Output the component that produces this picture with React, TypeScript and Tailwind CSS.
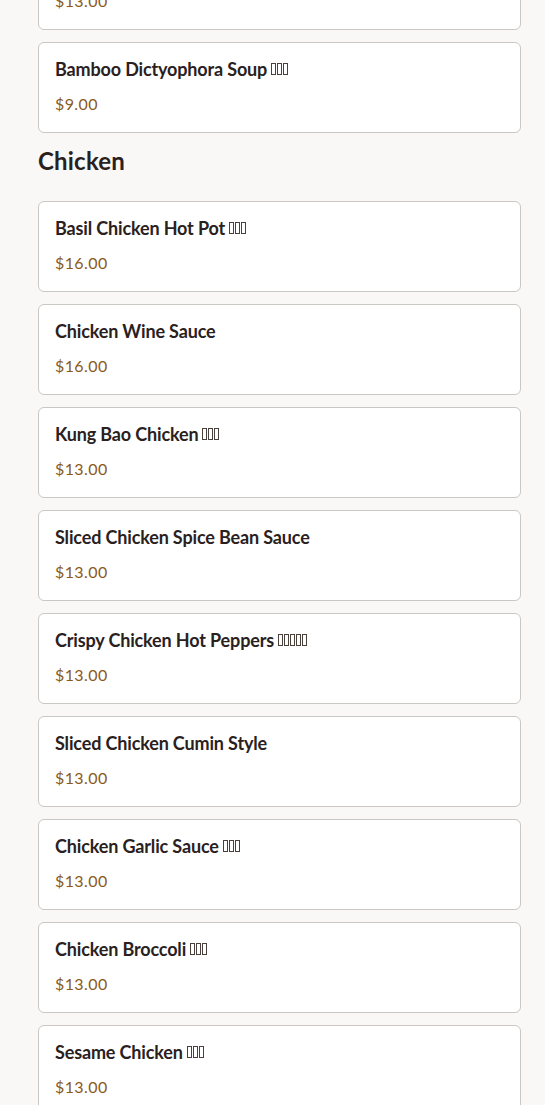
import React from "react";

type Item = { name: string; tofu?: number; price: string };

const soups: Item[] = [
  { name: "Bamboo Dictyophora Soup", tofu: 3, price: "$9.00" },
];

const chicken: Item[] = [
  { name: "Basil Chicken Hot Pot", tofu: 3, price: "$16.00" },
  { name: "Chicken Wine Sauce", price: "$16.00" },
  { name: "Kung Bao Chicken", tofu: 3, price: "$13.00" },
  { name: "Sliced Chicken Spice Bean Sauce", price: "$13.00" },
  { name: "Crispy Chicken Hot Peppers", tofu: 5, price: "$13.00" },
  { name: "Sliced Chicken Cumin Style", price: "$13.00" },
  { name: "Chicken Garlic Sauce", tofu: 3, price: "$13.00" },
  { name: "Chicken Broccoli", tofu: 3, price: "$13.00" },
  { name: "Sesame Chicken", tofu: 3, price: "$13.00" },
];

function Tofu({ n }: { n: number }) {
  return (
    <span className="ml-[4px] inline-flex gap-[1px] align-middle">
      {Array.from({ length: n }).map((_, i) => (
        <span
          key={i}
          className="inline-block h-[12px] w-[5px] border border-[#4a403c]"
        />
      ))}
    </span>
  );
}

function Card({ item }: { item: Item }) {
  return (
    <div className="h-[91px] rounded-[6px] border border-[#cbc7c3] bg-white px-[16px] pt-[14px]">
      <div className="flex items-center text-[18px] font-bold leading-[24px] tracking-[-0.15px] text-[#2a211e]">
        <span>{item.name}</span>
        {item.tofu ? <Tofu n={item.tofu} /> : null}
      </div>
      <div className="mt-[11px] text-[16px] leading-[24px] tracking-[0.4px] text-[#8a5a1c]">
        {item.price}
      </div>
    </div>
  );
}

export default function App() {
  return (
    <div
      className="min-h-[1105px] overflow-hidden bg-[#f9f8f6] pl-[38px] pr-[24px]"
      style={{ fontFamily: "Lato, 'Noto Sans', sans-serif" }}
    >
      <div className="-mt-[61px] flex flex-col gap-[12px]">
        <Card item={{ name: "Hot and Sour Soup", price: "$13.00" }} />
        {soups.map((s) => (
          <Card key={s.name} item={s} />
        ))}
      </div>
      <h2 className="mt-[12px] text-[24px] font-bold leading-[32px] tracking-[0.2px] text-[#2a211e]">
        Chicken
      </h2>
      <div className="mt-[24px] flex flex-col gap-[12px]">
        {chicken.map((c) => (
          <Card key={c.name} item={c} />
        ))}
      </div>
    </div>
  );
}
